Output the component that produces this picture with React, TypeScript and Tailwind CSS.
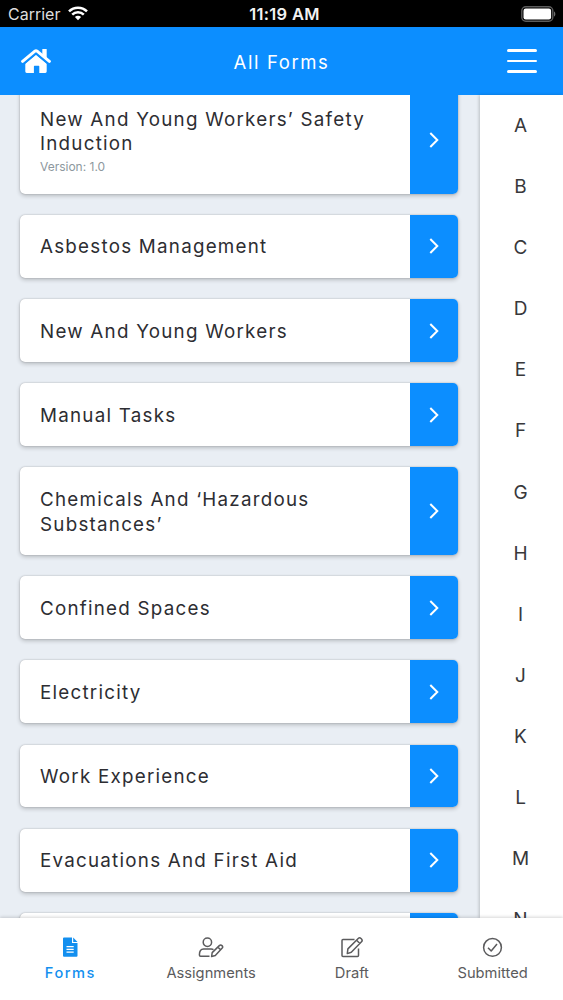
import type { ReactNode } from 'react'
import { clsx } from 'clsx'

interface FormItem {
  name: string
  version?: string
}

const FORMS: FormItem[] = [
  { name: 'New And Young Workers’ Safety Induction', version: '1.0' },
  { name: 'Asbestos Management' },
  { name: 'New And Young Workers' },
  { name: 'Manual Tasks' },
  { name: 'Chemicals And ‘Hazardous Substances’' },
  { name: 'Confined Spaces' },
  { name: 'Electricity' },
  { name: 'Work Experience' },
  { name: 'Evacuations And First Aid' },
]

const LETTERS = 'ABCDEFGHIJKLMN'.split('')

function StatusBar() {
  return (
    <div className="grid h-[27px] shrink-0 grid-cols-3 items-center bg-black text-[16.5px] text-white">
      <div className="flex items-center gap-2 pl-[8px] text-[#dedede]">
        <span className="text-[16px]">Carrier</span>
        <svg width="20" height="15" viewBox="0 0 20 15" fill="none" stroke="#fff" strokeWidth="2.5">
          <path d="M1 5.4a12.8 12.8 0 0 1 18 0" />
          <path d="M4.2 8.7a8.2 8.2 0 0 1 11.6 0" />
          <path d="M10 14.2 6.9 11.1a4.4 4.4 0 0 1 6.2 0Z" fill="#fff" stroke="none" />
        </svg>
      </div>
      <span className="pt-px pl-[6px] text-center font-semibold tracking-[0.3px] whitespace-nowrap text-[#f2f2f2]">
        11:19 AM
      </span>
      <div className="flex justify-end pr-[7px]">
        <svg width="35" height="16" viewBox="0 0 35 16">
          <rect x="0.8" y="0.8" width="31" height="14.4" rx="4" fill="none" stroke="#5c5c5c" strokeWidth="1.4" />
          <rect x="2.5" y="2.5" width="27.6" height="11" rx="2.2" fill="#fff" />
          <path d="M33 5.5c1.8.6 1.8 4.4 0 5Z" fill="#6c6c6c" />
        </svg>
      </div>
    </div>
  )
}

function Header() {
  return (
    <header className="flex h-[68px] shrink-0 items-center justify-between bg-[#0c8eff] pr-[26px] pl-[21px] text-white">
      <button aria-label="Home">
        <svg width="30" height="26" viewBox="0 0 30 26">
          <path
            d="M4.3 15.6 15 6.6l10.7 9v8a1.4 1.4 0 0 1-1.4 1.4h-6v-6.6a.6.6 0 0 0-.6-.6h-4.2a.6.6 0 0 0-.6.6V25H5.700a1.4 1.4 0 0 1-1.400-1.400Z"
            fill="currentColor"
          />
          <path d="M3 16 15 5.900 27 16" fill="none" stroke="#0c8eff" strokeWidth="1.3" />
          <path
            d="M1.6 13.400 13.900 3.200a1.800 1.800 0 0 1 2.200 0l12.300 10.200"
            fill="none"
            stroke="currentColor"
            strokeWidth="3"
            strokeLinecap="round"
          />
          <path d="M21.300 1.600a.6.6 0 0 1 .6-.6h3.200a.6.6 0 0 1 .6.6v9.400l-4.400-3.600Z" fill="currentColor" />
        </svg>
      </button>
      <h1 className="pt-[3px] pl-[5px] text-[18.5px] tracking-[1.6px]">All Forms</h1>
      <button aria-label="Menu" className="flex w-[30px] flex-col gap-[8px]">
        <span className="h-[2.5px] rounded-full bg-white" />
        <span className="h-[2.5px] rounded-full bg-white" />
        <span className="h-[2.5px] rounded-full bg-white" />
      </button>
    </header>
  )
}

function FormCard({ form }: { form: FormItem }) {
  return (
    <div className="flex w-[438px] shrink-0 overflow-hidden rounded-[5px] bg-white shadow-[0_2px_4px_rgba(0,0,0,0.2),0_0_1.5px_rgba(0,0,0,0.3)]">
      <div className="flex-1 pt-[20.6px] pr-4 pb-[17.8px] pl-5">
        <p className="text-[18.8px] leading-[24.5px] tracking-[1.24px] text-[#2d2d32]">{form.name}</p>
        {form.version && (
          <p className="text-[12px] leading-[19.2px] text-[#8d989e]">Version: {form.version}</p>
        )}
      </div>
      <div className="flex w-[48px] items-center justify-center bg-[#0c8eff]">
        <svg width="10" height="16" viewBox="0 0 10 16" fill="none" stroke="#fff" strokeWidth="2">
          <path d="m1.3 1 7 7-7 7" />
        </svg>
      </div>
    </div>
  )
}

interface TabProps {
  label: string
  active?: boolean
  children: ReactNode
}

function Tab({ label, active, children }: TabProps) {
  return (
    <button
      className={clsx(
        'flex flex-1 flex-col items-center gap-[5px] pt-[17px]',
        active ? 'text-[#138fef]' : 'text-[#5b5b5d]',
      )}
    >
      <svg
        width="26"
        height="24"
        viewBox="0 0 26 24"
        fill="none"
        stroke="currentColor"
        strokeWidth="1.5"
        strokeLinejoin="round"
      >
        {children}
      </svg>
      <span className={clsx('leading-[18px]', active ? 'text-[14.6px] font-medium tracking-[1.5px]' : 'text-[14.7px]')}>
        {label}
      </span>
    </button>
  )
}

function TabBar() {
  return (
    <nav className="z-10 flex h-[82px] shrink-0 bg-white shadow-[0_-1px_3px_rgba(0,0,0,0.16)]">
      <Tab label="Forms" active>
        <path d="M6 3.500a1 1 0 0 1 1-1h8v5.500h5.500v12.800a1 1 0 0 1-1 1H7a1 1 0 0 1-1-1Z" fill="currentColor" stroke="none" />
        <path d="M16.200 2.500 20.500 6.900H16.200Z" fill="currentColor" stroke="none" />
        <path d="M9.500 11.700h7.200M9.500 14.400h7.200M9.500 17.100h7.200" stroke="#fff" strokeWidth="1.2" />
      </Tab>
      <Tab label="Assignments">
        <circle cx="9.400" cy="7.200" r="4.200" />
        <path d="M11.500 21.200H2.600c-.8 0-1.200-.4-1.200-1.200 0-3.600 1.700-5.900 4.200-5.900h7.600c1 0 1.700.2 2.300.6" />
        <path d="m13.600 21.500.6-3.900 7.100-7a1.900 1.900 0 0 1 2.700 2.700L17.300 20.500ZM19.900 12.100l2.700 2.700" />
      </Tab>
      <Tab label="Draft">
        <path d="M15.500 4.600H4a1 1 0 0 0-1 1v14.900a1 1 0 0 0 1 1h14.500a1 1 0 0 0 1-1V13.500" />
        <path d="m8.300 18.600.6-4.700L19.200 3.500a2 2 0 0 1 2.800 0l.5.500a2 2 0 0 1 0 2.800L12.300 17.300ZM17.600 5.200l3.300 3.300" />
      </Tab>
      <Tab label="Submitted">
        <circle cx="12.500" cy="12.400" r="8.900" />
        <path d="m8 12.700 3.200 3.300 5.800-7" />
      </Tab>
    </nav>
  )
}

export default function App() {
  return (
    <div className="flex h-[1000px] w-[563px] flex-col overflow-hidden bg-[#e9eef4] font-['Inter','Liberation_Sans',sans-serif]">
      <StatusBar />
      <Header />
      <div className="flex min-h-0 flex-1">
        <main className="-mt-2 flex min-w-0 flex-1 flex-col gap-[21.3px] overflow-hidden pl-5 [clip-path:inset(8px_0_0_0)]">
          {FORMS.map((form) => (
            <FormCard key={form.name} form={form} />
          ))}
          {/* top edge of the next card, still below the fold */}
          <div className="flex h-[63px] w-[438px] shrink-0 justify-end overflow-hidden rounded-[5px] bg-white shadow-[0_2px_4px_rgba(0,0,0,0.2),0_0_1.5px_rgba(0,0,0,0.3)]">
            <div className="w-[48px] bg-[#0c8eff]" />
          </div>
        </main>
        <aside className="w-[83px] shrink-0 overflow-hidden bg-white shadow-[-1px_0_3px_rgba(0,0,0,0.2)]">
          <ul className="flex flex-col items-center pt-[0.5px] pr-[2px] text-[19px] text-[#38383b]">
            {LETTERS.map((letter) => (
              <li key={letter} className="flex h-[61.13px] shrink-0 items-center">
                {letter}
              </li>
            ))}
          </ul>
        </aside>
      </div>
      <TabBar />
    </div>
  )
}
